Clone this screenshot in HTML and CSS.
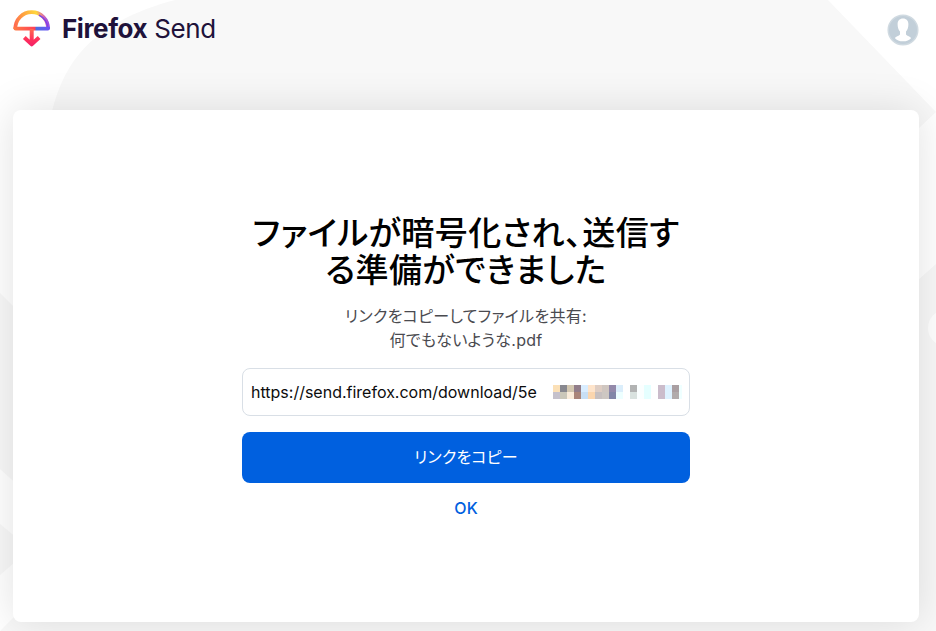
FILE: index.html
```html
<!DOCTYPE html>
<html lang="ja">
<head>
  <meta charset="UTF-8" />
  <title>Firefox Send</title>
  <link rel="stylesheet" href="styles.css">
</head>
<body>
  <header class="header">
    <a class="logo" href="#">
      <svg class="logo-icon" width="38" height="38" viewBox="0 0 38 38" fill="none">
        <defs>
          <linearGradient id="dome" x1="3" y1="20" x2="36" y2="12" gradientUnits="userSpaceOnUse">
            <stop offset="0" stop-color="#ff6a50" />
            <stop offset="0.3" stop-color="#ffa040" />
            <stop offset="0.7" stop-color="#ffd83c" />
            <stop offset="0.88" stop-color="#e070a0" />
            <stop offset="1" stop-color="#8a3ff0" />
          </linearGradient>
          <linearGradient id="base" x1="2" y1="0" x2="37" y2="0" gradientUnits="userSpaceOnUse">
            <stop offset="0" stop-color="#ff7a45" />
            <stop offset="0.57" stop-color="#ff4056" />
            <stop offset="0.6" stop-color="#4b6fe0" />
            <stop offset="1" stop-color="#7150f5" />
          </linearGradient>
          <linearGradient id="arrow" x1="0" y1="19" x2="0" y2="37" gradientUnits="userSpaceOnUse">
            <stop offset="0" stop-color="#ff6a50" />
            <stop offset="0.6" stop-color="#ff2f5c" />
            <stop offset="1" stop-color="#f0206a" />
          </linearGradient>
        </defs>
        <path d="M2.300 19C2.300 9.500 9.500 2.200 18.700 2.200S35.100 9.500 35.100 19" stroke="url(#dome)" stroke-width="3.800" />
        <path d="M26 5.200C31.500 8 34.300 12.500 34.700 18" stroke="#7a3ff0" stroke-width="1.500" />
        <path d="M0.500 16.800H37V18.200Q37 20.600 34.800 20.600H2.700Q0.500 20.600 0.500 18.200Z" fill="url(#base)" />
        <path d="M18.700 19V34M11.300 27.500L18.700 34.300L26.100 27.500" stroke="url(#arrow)" stroke-width="4" stroke-linejoin="round" />
      </svg>
      <span class="logo-text"><b>Firefox</b> Send</span>
    </a>
    <svg class="avatar" width="32" height="32" viewBox="0 0 32 32">
      <circle cx="16" cy="16" r="14.800" fill="#c2cfd9" stroke="#d0dae1" stroke-width="1.500" />
      <path d="M16 4.500C12.500 4.500 10.600 6.800 10.600 10.200C10.600 13.500 11.500 16 13 17.500V20.500C12 22.200 8.200 22.500 8 24.200C9.500 26.300 12.500 27.300 16 27.300S22.500 26.300 24 24.200C23.800 22.500 20 22.200 19 20.500V17.500C20.500 16 21.400 13.500 21.400 10.200C21.400 6.800 19.500 4.500 16 4.500Z" fill="#fff" />
    </svg>
  </header>

  <main class="card">
    <div class="share">
      <h1>ファイルが暗号化され、送信す<br>る準備ができました</h1>
      <p>リンクをコピーしてファイルを共有:<br>何でもないような.pdf</p>
      <div class="link-box">
        <span>https://send.firefox.com/download/5e</span>
        <svg class="mosaic" width="129" height="14" viewBox="0 0 129 14" shape-rendering="crispEdges">
          <g id="mosaic"></g>
        </svg>
      </div>
      <button class="copy-btn">リンクをコピー</button>
      <a class="ok-link" href="#">OK</a>
    </div>
  </main>

  <script>
    // hides the rest of the link behind coloured blocks
    const rows = [
      ['#fbe0b7', '#88888f', '#d3c7b0', '#917d89', '#d9edff', '#fee4cb', '#decdc3', '#cfc6c0', '#9389aa', '#dbeefb', '#fff', '#b2b3b3', '#fbffff', '#e5ffff', '#fff', '#cbbccb', '#def2ff', '#aa9fa2', '#efffff'],
      ['#c5c1cc', '#cac7b9', '#faecda', '#aa8579', '#c8dff5', '#fbd6ae', '#c7c0c0', '#cdc7c2', '#8287a8', '#edffff', '#fff', '#d9e2df', '#fbffff', '#e5ffff', '#fff', '#cbbccb', '#def2ff', '#b1abab', '#efffff']
    ];
    const mosaic = document.getElementById('mosaic');

    rows.forEach((row, y) => {
      row.forEach((color, x) => {
        const block = document.createElementNS('http://www.w3.org/2000/svg', 'rect');
        block.setAttribute('x', x * 7);
        block.setAttribute('y', y * 7);
        block.setAttribute('width', 7);
        block.setAttribute('height', 7);
        block.setAttribute('fill', color);
        mosaic.appendChild(block);
      });
    });
  </script>
</body>
</html>
```
FILE: styles.css
```css
* {
  box-sizing: border-box;
}

body {
  margin: 0;
  height: 631px;
  overflow: hidden;
  font-family: Inter, 'Noto Sans CJK JP', sans-serif;
  font-size: 16px;
  background: #fff url("data:image/svg+xml,%3Csvg xmlns='http://www.w3.org/2000/svg' width='936' height='631'%3E%3Cg fill='%23f8f8f8'%3E%3Cpath d='M50 120C62 62 92 22 175 0H828L936 112L900 146H50Z'/%3E%3Cpath d='M0 293L30 323V496L0 469Z'/%3E%3Cpath d='M0 524L30 549L0 575Z'/%3E%3Cpath d='M0 631L30 601H900V296L936 264V631Z'/%3E%3C/g%3E%3Ccircle cx='946' cy='328' r='18' fill='%23fff'/%3E%3C/svg%3E") no-repeat;
}

.header {
  display: flex;
  justify-content: space-between;
  align-items: center;
  height: 60px;
  padding: 0 17px 0 13px;
}

.logo {
  display: flex;
  align-items: center;
  gap: 11px;
  color: #20123a;
  text-decoration: none;
}

.logo-icon {
  display: block;
  margin-top: -3px;
}

.logo-text {
  font-size: 26px;
  line-height: 36px;
  letter-spacing: -0.4px;
  margin-top: -3px;
}

.logo-text b {
  font-weight: 700;
}

.card {
  display: flex;
  justify-content: center;
  width: 906px;
  height: 512px;
  margin: 50px 0 0 13px;
  padding-top: 105px;
  background: #fff;
  border-radius: 8px;
  box-shadow: 0 0 42px rgba(12, 12, 13, 0.12);
}

.share {
  display: flex;
  flex-direction: column;
  width: 448px;
  text-align: center;
}

h1 {
  margin: 0;
  font-size: 33px;
  font-weight: 500;
  line-height: 37px;
  letter-spacing: 0.45px;
  color: #000;
  white-space: nowrap;
  font-feature-settings: 'palt';
}

p {
  margin: 15px 0 16px;
  line-height: 24px;
  letter-spacing: 0.3px;
  color: #4a4a4f;
  font-feature-settings: 'palt';
}

.link-box {
  display: flex;
  align-items: center;
  justify-content: space-between;
  height: 48px;
  padding: 0 7px 0 8px;
  border: 1px solid #d9dfe6;
  border-radius: 8px;
  color: #0c0c0d;
}

.copy-btn {
  height: 51px;
  margin-top: 16px;
  padding: 0 0 3px;
  border: none;
  border-radius: 8px;
  background: #0060df;
  color: #fff;
  font: inherit;
  letter-spacing: 0.2px;
  font-feature-settings: 'palt';
  cursor: pointer;
}

.ok-link {
  align-self: center;
  margin-top: 15px;
  line-height: 20px;
  font-weight: 500;
  color: #0060df;
  text-decoration: none;
}
```
